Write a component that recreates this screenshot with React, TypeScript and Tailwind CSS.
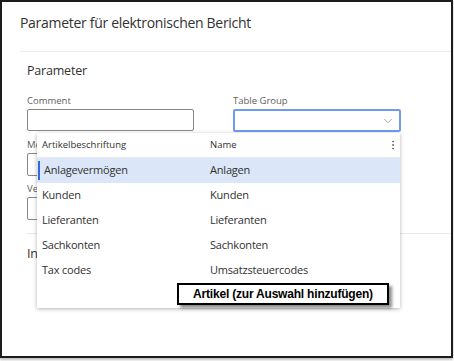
import React from "react";
import { ChevronDown, EllipsisVertical } from "lucide-react";

const rows = [
    { label: "Anlagevermögen", name: "Anlagen", selected: true },
    { label: "Kunden", name: "Kunden" },
    { label: "Lieferanten", name: "Lieferanten" },
    { label: "Sachkonten", name: "Sachkonten" },
    { label: "Tax codes", name: "Umsatzsteuercodes" },
];

const App: React.FC = () => {
    return (
        <div
            className="w-[454px] h-[361px] bg-white relative"
            style={{ fontFamily: '"Open Sans", "Noto Sans", sans-serif' }}
        >
            {/* Frame */}
            <div className="w-[453px] h-[358px] border-2 border-[#1c1c1c] bg-white shadow-[0_2px_2px_rgba(0,0,0,0.25)] flex flex-col">
                <div className="pl-[18px] pt-[9px]">
                    <h1 className="text-[14px] leading-[24px] text-[#323130] tracking-[-0.3px]">
                        Parameter für elektronischen Bericht
                    </h1>
                    <div className="mt-[16px] border-t border-[#edebe9]" />
                </div>

                {/* Form */}
                <div className="pl-[25px] pt-[9px]">
                    <h2 className="text-[12.5px] leading-[20px] text-[#323130] font-medium tracking-[-0.2px]">
                        Parameter
                    </h2>
                    <div className="mt-[14px] flex gap-[39px]">
                        <div className="w-[167px]">
                            <div className="text-[9.5px] leading-[12px] text-[#605e5c]">Comment</div>
                            <div className="mt-[2px] h-[22px] border border-[#8a8886] rounded-[2px]" />
                        </div>
                        <div className="w-[168px]">
                            <div className="text-[9.5px] leading-[12px] text-[#605e5c]">Table Group</div>
                            <div className="mt-[2px] h-[23px] border-2 border-[#6f9bef] rounded-[2px] flex items-center justify-end pr-[4px]">
                                <ChevronDown size={14} strokeWidth={1.2} className="text-[#8a8886]" />
                            </div>
                        </div>
                    </div>
                    <div className="mt-[7px] w-[167px]">
                        <div className="text-[9.5px] leading-[12px] text-[#605e5c]">Medium</div>
                        <div className="mt-[2px] h-[23px] border border-[#8a8886] rounded-[2px]" />
                    </div>
                    <div className="mt-[7px] w-[167px]">
                        <div className="text-[9.5px] leading-[12px] text-[#605e5c]">Version</div>
                        <div className="mt-[2px] h-[23px] border border-[#8a8886] rounded-[2px]" />
                    </div>
                    <div className="mt-[13px] border-t border-[#edebe9]" />
                    <h2 className="mt-[10px] text-[12.5px] leading-[20px] text-[#323130] font-medium tracking-[-0.2px]">
                        Info
                    </h2>
                </div>
            </div>

            {/* Dropdown */}
            <div className="absolute left-[37px] top-[133px] w-[363px] h-[175px] bg-white shadow-[0_1px_4px_rgba(0,0,0,0.3)] text-[#323130]">
                <div className="h-[25px] flex items-center border-b border-[#edebe9] text-[9.5px] text-[#323130]">
                    <div className="w-[173px] pl-[5px]">Artikelbeschriftung</div>
                    <div className="flex-1">Name</div>
                    <EllipsisVertical size={12} strokeWidth={2} className="mr-[1px] text-[#605e5c]" />
                </div>
                {rows.map((r) => (
                    <div
                        key={r.label}
                        className={
                            r.selected
                                ? "h-[25px] flex items-center text-[11px] tracking-[-0.2px] bg-[#dbe6f8] relative"
                                : "h-[25px] flex items-center text-[11px] tracking-[-0.2px]"
                        }
                    >
                        {r.selected && (
                            <div className="absolute left-[1px] top-[3px] bottom-[3px] w-[2px] bg-[#2f6ae0]" />
                        )}
                        <div className={r.selected ? "w-[173px] pl-[7px]" : "w-[173px] pl-[5px]"}>
                            {r.label}
                        </div>
                        <div className="flex-1">{r.name}</div>
                    </div>
                ))}
            </div>

            {/* Callout annotation */}
            <div
                className="absolute left-[177px] top-[283px] w-[212px] h-[22px] border-2 border-black bg-white flex items-center justify-center text-[12px] font-bold text-black tracking-[-0.2px] shadow-[3px_3px_3px_rgba(0,0,0,0.45)]"
                style={{ fontFamily: '"Liberation Sans", Arial, sans-serif' }}
            >
                Artikel (zur Auswahl hinzufügen)
            </div>
        </div>
    );
};

export default App;
